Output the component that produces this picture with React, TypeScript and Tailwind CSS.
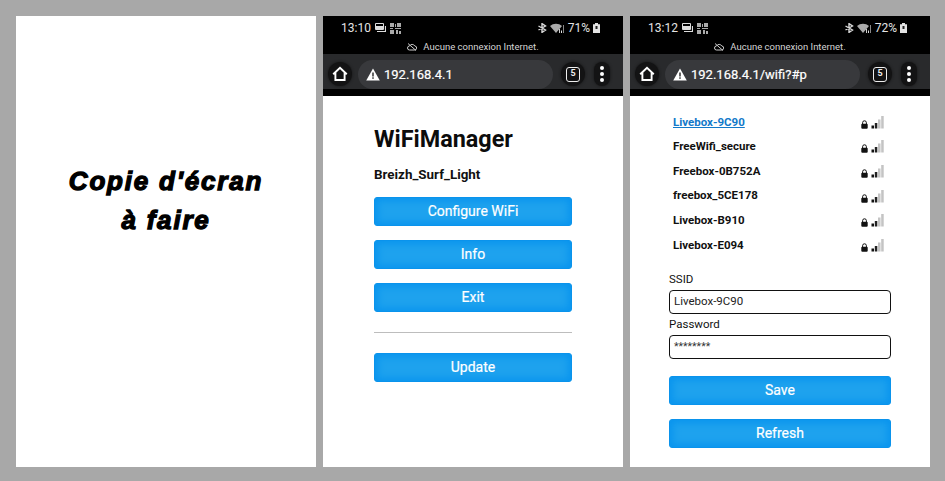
import { ReactNode } from 'react';

function BlueButton({ label }: { label: string }) {
  return (
    <div className="h-[29px] w-full rounded-[3px] bg-[#1ea2ee] border border-[#0a93ec] shadow-[inset_0_0_7px_3px_#0a95ee] flex items-center justify-center text-white text-[14px] font-normal [-webkit-text-stroke:0.2px_white]">
      {label}
    </div>
  );
}

function SignalBars() {
  return (
    <svg width="13" height="13" viewBox="0 0 13 13">
      <rect x="0.5" y="9.5" width="2.5" height="3" fill="#111" />
      <rect x="3.8" y="7" width="2.5" height="5.5" fill="#222" />
      <rect x="7" y="3.5" width="2.5" height="9" fill="#c4c4c4" />
      <rect x="10.2" y="0" width="2.5" height="12.5" fill="#c4c4c4" />
    </svg>
  );
}

function Lock() {
  return (
    <svg width="7" height="9" viewBox="0 0 7 9">
      <path d="M1.6 4V2.7a1.9 1.9 0 0 1 3.8 0V4" fill="none" stroke="#111" strokeWidth="1" />
      <rect x="0.3" y="3.8" width="6.4" height="5" rx="1" fill="#111" />
    </svg>
  );
}

function NetworkRow({ name, active }: { name: string; active?: boolean }) {
  return (
    <div className="h-[24.6px] flex items-center justify-between pl-[4px] pr-[7px]">
      <span className={active ? 'text-[11.5px] font-bold text-[#1279c9] underline' : 'text-[11.5px] font-bold text-[#111]'}>
        {name}
      </span>
      <span className="flex items-end gap-[3px]">
        <Lock />
        <SignalBars />
      </span>
    </div>
  );
}

function StatusIcons() {
  return (
    <span className="flex items-center gap-[3px] text-[#d8d8d8]">
      <svg width="10" height="10" viewBox="0 0 10 10" fill="none" stroke="currentColor" strokeWidth="1.4">
        <path d="M1.5 3l7 4-3.5 2.4V.6L8.5 3l-7 4" />
      </svg>
      <svg width="15" height="10" viewBox="0 0 15 10">
        <path d="M0 3a9 9 0 0 1 12 0L6 10z" fill="#aaa" />
        <rect x="9" y="6" width="1" height="4" fill="#ccc" />
        <rect x="11" y="7.5" width="1" height="2.5" fill="#ddd" />
        <rect x="13" y="2" width="1" height="8" fill="#888" />
      </svg>
    </span>
  );
}

function QrIcon() {
  return (
    <svg width="11" height="11" viewBox="0 0 11 11" fill="#aaa">
      <rect x="0" y="0" width="4" height="4" />
      <rect x="7" y="0" width="4" height="4" />
      <rect x="0" y="7" width="4" height="4" />
      <rect x="5" y="1" width="1" height="3" />
      <rect x="5" y="5" width="6" height="1" />
      <rect x="0" y="5" width="3" height="1" />
      <rect x="6" y="7" width="2" height="4" />
      <rect x="9" y="8" width="2" height="3" />
    </svg>
  );
}

function Phone({ time, battery, url, children }: { time: string; battery: string; url: string; children: ReactNode }) {
  return (
    <div className="w-[300px] h-full bg-white flex flex-col font-['Roboto',sans-serif]">
      <div className="h-[38px] bg-black text-[#e4e4e4] flex flex-col">
        <div className="h-[25px] pt-[1px] pl-[18px] pr-[23px] flex items-center justify-between text-[12px]">
          <span className="flex items-center gap-[4px]">
            {time}
            <svg width="11" height="10" viewBox="0 0 11 10">
              <path d="M0.5 0.5h8v6h-8z" fill="none" stroke="#ddd" strokeWidth="1" />
              <path d="M2 8.5h8.5V3" fill="none" stroke="#ddd" strokeWidth="1.2" />
              <rect x="1" y="3" width="7" height="3.5" fill="#ddd" />
            </svg>
            <QrIcon />
          </span>
          <span className="flex items-center gap-[3px]">
            <StatusIcons />
            <span>{battery}</span>
            <svg width="7" height="10" viewBox="0 0 7 10">
              <path d="M2 0h3v1.2h2V10H0V1.2h2z" fill="#e4e4e4" />
              <rect x="2.5" y="3" width="2" height="3" fill="#222" />
            </svg>
          </span>
        </div>
        <div className="flex-1 flex items-center justify-center gap-[6px] text-[9.5px] text-[#d4d4d4]">
          <svg width="10" height="8" viewBox="0 0 10 8" fill="none" stroke="#ccc" strokeWidth="1">
            <path d="M2.5 7h5a2 2 0 0 0 .3-4A3 3 0 0 0 2.5 3a2 2 0 0 0 0 4zM1 .5l8 7" />
          </svg>
          Aucune connexion Internet.
        </div>
      </div>
      <div className="h-[42px] bg-black flex flex-col">
        <div className="h-[35px] bg-[#292a2c] pl-[5px] pr-[8px] flex items-start pt-[6px]">
          <span className="w-[24px] h-[24px] mt-[2px] mr-[6px] rounded-full bg-[#131314] shadow-[0_0_3px_#131314] flex items-center justify-center">
            <svg width="16" height="16" viewBox="0 0 16 16" fill="none" stroke="#fff" strokeWidth="1.9" strokeLinejoin="miter">
              <path d="M1.2 8.2L8 1.8l6.8 6.4M3.4 6.8V14h9.2V6.8" />
            </svg>
          </span>
          <div className="w-[195px] h-[29px] rounded-full bg-[#38393c] flex items-center pl-[8px] gap-[4px] text-white text-[13px] [-webkit-text-stroke:0.2px_white]">
            <svg width="14" height="13" viewBox="0 0 14 13">
              <path d="M7 0.5L13.8 12.5H0.2z" fill="#fff" />
              <rect x="6.3" y="4.5" width="1.4" height="4" fill="#222" />
              <rect x="6.3" y="9.3" width="1.4" height="1.5" fill="#222" />
            </svg>
            {url}
          </div>
          <span className="ml-[8px] mr-[2px] mt-[2px] w-[24px] h-[24px] rounded-full bg-[#131314] shadow-[0_0_3px_#131314] flex items-center justify-center">
            <span className="w-[14px] h-[15px] border-[1.5px] border-[#eee] rounded-[3px] text-[9px] font-bold text-[#eee] flex items-center justify-center">5</span>
          </span>
          <span className="ml-[7px] mt-[2px] w-[16px] h-[24px] rounded-full bg-[#131314] shadow-[0_0_3px_#131314] flex flex-col items-center justify-center gap-[2.5px]">
            <span className="w-[3.5px] h-[3.5px] rounded-full bg-white" />
            <span className="w-[3.5px] h-[3.5px] rounded-full bg-white" />
            <span className="w-[3.5px] h-[3.5px] rounded-full bg-white" />
          </span>
        </div>
      </div>
      <div className="flex-1">{children}</div>
    </div>
  );
}

const networks = ['FreeWifi_secure', 'Freebox-0B752A', 'freebox_5CE178', 'Livebox-B910', 'Livebox-E094'];

export default function App() {
  return (
    <div className="w-[945px] h-[481px] bg-[#a8a8a8] pt-[16px] pb-[14px] pl-[16px] flex gap-[7px] overflow-hidden">
      <div className="w-[300px] h-full bg-white flex flex-col items-center pt-[146px]">
        <div className="text-center text-black italic font-bold text-[26px] leading-[39px] tracking-[1.8px] font-['Liberation_Sans',sans-serif] [-webkit-text-stroke:1.3px_black]">
          <div>Copie d'écran</div>
          <div>à faire</div>
        </div>
      </div>

      <Phone time="13:10" battery="71%" url="192.168.4.1">
        <div className="px-[51px] pt-[28px] flex flex-col">
          <h1 className="text-[23.4px] leading-[30px] font-bold text-[#0c0c0c]">WiFiManager</h1>
          <p className="mt-[13px] text-[13.4px] leading-[16px] font-bold text-[#111]">Breizh_Surf_Light</p>
          <div className="mt-[14px] flex flex-col gap-[14px]">
            <BlueButton label="Configure WiFi" />
            <BlueButton label="Info" />
            <BlueButton label="Exit" />
          </div>
          <div className="mt-[20px] mb-[20px] h-px bg-[#bdbdbd]" />
          <BlueButton label="Update" />
        </div>
      </Phone>

      <Phone time="13:12" battery="72%" url="192.168.4.1/wifi?#p">
        <div className="pl-[39px] pr-[39px] pt-[14px] flex flex-col">
          <NetworkRow name="Livebox-9C90" active />
          {networks.map((n) => (
            <NetworkRow key={n} name={n} />
          ))}
          <label className="mt-[14px] text-[11.5px] leading-[15px] text-[#111]">SSID</label>
          <div className="mt-[3px] h-[24px] rounded-[4px] border-[1.5px] border-[#111] flex items-center pl-[4px] text-[11.5px] text-[#222]">
            Livebox-9C90
          </div>
          <label className="mt-[3px] text-[11.5px] leading-[15px] text-[#111]">Password</label>
          <div className="mt-[3px] h-[24px] rounded-[4px] border-[1.5px] border-[#111] flex items-center pl-[4px] text-[10.5px] text-[#333]">
            ********
          </div>
          <div className="mt-[17px] flex flex-col gap-[14px]">
            <BlueButton label="Save" />
            <BlueButton label="Refresh" />
          </div>
        </div>
      </Phone>
    </div>
  );
}
